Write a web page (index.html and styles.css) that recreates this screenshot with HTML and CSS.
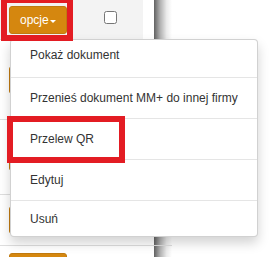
FILE: index.html
```html
<!DOCTYPE html>
<html lang="pl">
<head>
    <meta charset="UTF-8">
    <meta name="viewport" content="width=device-width, initial-scale=1.0">
    <title>Dokumenty</title>
    <link rel="stylesheet" href="styles.css">
</head>
<body>
    <div class="table">
        <div class="row row-active row-first">
            <div class="cell cell-action"><button class="btn-opcje">opcje<span class="caret"></span></button></div>
            <div class="cell cell-check"><input type="checkbox" class="check"></div>
            <div class="cell cell-gap"></div>
            <div class="cell cell-shade"></div>
            <div class="cell cell-rest"></div>
        </div>
        <!-- rows below sit behind the open menu, only their edges show -->
        <div class="row row-second">
            <div class="cell cell-action"><span class="btn-opcje btn-hidden"></span></div>
            <div class="cell cell-check"></div>
            <div class="cell cell-gap"></div>
            <div class="cell cell-shade"></div>
            <div class="cell cell-rest"></div>
        </div>
        <div class="row row-third">
            <div class="cell cell-action"><span class="btn-opcje btn-hidden"></span></div>
            <div class="cell cell-check"></div>
            <div class="cell cell-gap"></div>
            <div class="cell cell-shade"></div>
            <div class="cell cell-rest"></div>
        </div>
        <div class="row row-fourth">
            <div class="cell cell-action"><span class="btn-opcje btn-hidden"></span></div>
            <div class="cell cell-check"></div>
            <div class="cell cell-gap"></div>
            <div class="cell cell-shade"></div>
            <div class="cell cell-rest"></div>
        </div>
        <div class="row row-fifth">
            <div class="cell cell-action"><span class="btn-opcje btn-hidden"></span></div>
            <div class="cell cell-check"></div>
            <div class="cell cell-gap"></div>
            <div class="cell cell-shade"></div>
            <div class="cell cell-rest"></div>
        </div>
    </div>

    <ul class="dropdown">
        <li>Pokaż dokument</li>
        <li>Przenieś dokument MM+ do innej firmy</li>
        <li>Przelew QR</li>
        <li>Edytuj</li>
        <li>Usuń</li>
    </ul>

    <div class="mark mark-button"></div>
    <div class="mark mark-qr"></div>
</body>
</html>
```

FILE: styles.css
```css
body {
    margin: 0;
    padding: 0;
    width: 270px;
    height: 257px;
    overflow: hidden;
    position: relative;
    background: #fff;
    font-family: "Liberation Sans", Arial, sans-serif;
    font-size: 12px;
    color: #333;
}

.table {
    display: flex;
    flex-direction: column;
}

.row {
    display: flex;
}

.row-first {
    height: 40px;
}

.row-second {
    height: 80px;
}

.row-third {
    height: 75px;
}

.row-fourth {
    height: 51px;
}

.row-fifth {
    height: 43px;
}

.cell {
    display: flex;
    align-items: center;
    box-sizing: border-box;
    border-bottom: 1px solid #dedede;
}

.cell-action {
    width: 85px;
    padding-left: 9px;
}

.cell-check {
    width: 58px;
    padding-left: 19px;
    align-items: flex-start;
    padding-top: 11px;
}

.row-active .cell-action,
.row-active .cell-check {
    background: #f3f3f3;
}

.cell-gap {
    width: 11px;
}

.cell-shade {
    width: 18px;
    background: linear-gradient(to right, rgba(0, 0, 0, 0.62), rgba(0, 0, 0, 0.3) 35%, rgba(0, 0, 0, 0.08) 70%, rgba(0, 0, 0, 0));
}

.cell-rest {
    flex: 1;
    border-bottom: none;
}

.check {
    margin: 0;
    width: 13px;
    height: 13px;
}

.btn-opcje {
    height: 28px;
    padding: 0 10px;
    box-sizing: border-box;
    border: 1px solid #c07a10;
    border-radius: 3px;
    background: #d5870f;
    color: #fff;
    font-family: "Liberation Sans", Arial, sans-serif;
    font-size: 12px;
    line-height: 14px;
    display: flex;
    align-items: center;
}

.btn-hidden {
    width: 58px;
}

.caret {
    display: inline-block;
    width: 0;
    height: 0;
    margin-left: 1px;
    margin-top: 3px;
    border-top: 3px solid #fff;
    border-left: 3px solid transparent;
    border-right: 3px solid transparent;
}

.dropdown {
    position: absolute;
    left: 10px;
    top: 39px;
    width: 248px;
    box-sizing: border-box;
    margin: 0;
    padding: 0;
    list-style: none;
    background: #fff;
    border: 1px solid rgba(0, 0, 0, 0.18);
    border-radius: 4px;
    box-shadow: 0 6px 12px rgba(0, 0, 0, 0.175);
}

.dropdown li {
    padding: 13px 19px;
    line-height: 14px;
    border-bottom: 1px solid #e5e5e5;
    white-space: nowrap;
}

.dropdown li:first-child {
    padding-top: 8px;
    padding-bottom: 15px;
}

.dropdown li:last-child {
    padding-top: 11px;
    padding-bottom: 10px;
    border-bottom: none;
}

.mark {
    position: absolute;
    border: 6px solid #e31c23;
    box-sizing: border-box;
}

.mark-button {
    left: 1px;
    top: -3px;
    width: 72px;
    height: 44px;
}

.mark-qr {
    left: 7px;
    top: 116px;
    width: 118px;
    height: 47px;
}
```
